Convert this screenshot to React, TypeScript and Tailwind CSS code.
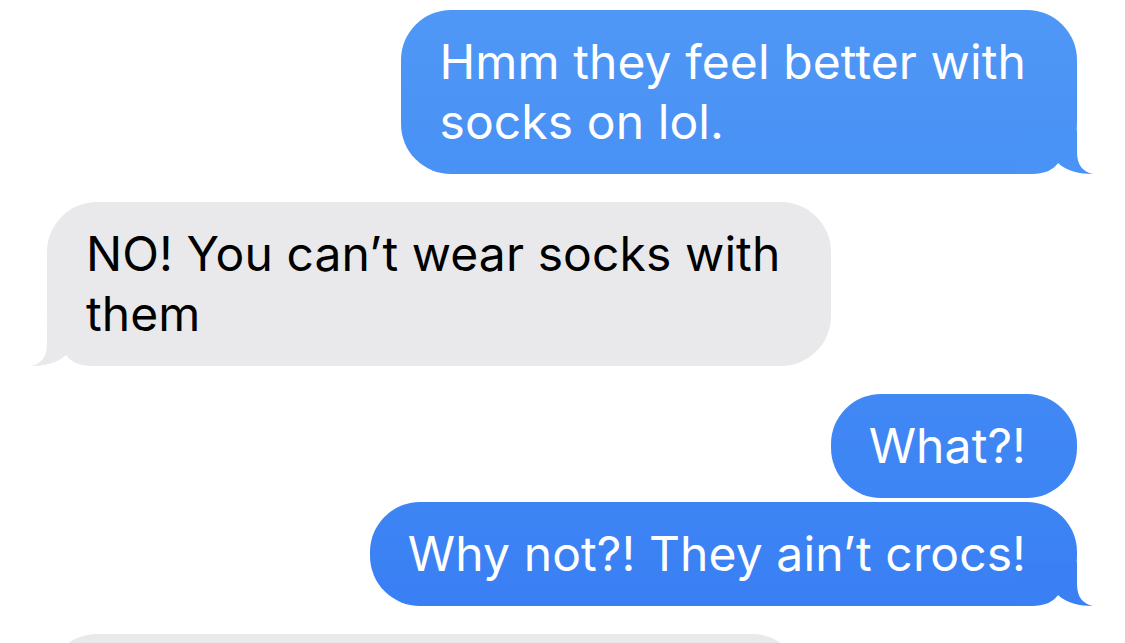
const messages = [
  { id: 1, from: 'me', lines: ['Hmm they feel better with', 'socks on lol.'], tail: true, tailColor: '#4a93f6' },
  { id: 2, from: 'them', lines: ['NO! You can’t wear socks with', 'them'], tail: true },
  { id: 3, from: 'me', lines: ['What?!'], tail: false, tailColor: '' },
  { id: 4, from: 'me', lines: ['Why not?! They ain’t crocs!'], tail: true, tailColor: '#3a80f4' },
  { id: 5, from: 'them', lines: [], tail: false },
]

function Tail({ color, flip }: { color: string; flip?: boolean }) {
  return (
    <svg
      className={`pointer-events-none absolute bottom-0 h-[44px] w-[76px] ${flip ? 'left-[-16px] -scale-x-100' : 'right-[-16px]'}`}
      viewBox="0 0 76 44"
      fill={color}
    >
      <path d="M0 44 L0 0 L60 0 L60 22 C60 35 66 42 76 44 C63 44 49 41 41 33 C36 40 28 44 14 44 Z" />
    </svg>
  )
}

function Lines({ lines }: { lines: string[] }) {
  return (
    <span className="relative flex flex-col whitespace-nowrap">
      {lines.map((l) => (
        <span key={l}>{l}</span>
      ))}
    </span>
  )
}

export default function App() {
  return (
    <div className="h-[643px] w-[1125px] overflow-hidden bg-white pt-[10px] font-['Inter','Liberation_Sans',sans-serif] text-[48px] leading-[60px] tracking-[0.1px]">
      <div className="flex flex-col">
        {messages.map((m, i) => {
          const prev = messages[i - 1]
          const gap = !prev ? '' : prev.from === m.from ? 'mt-[4px]' : 'mt-[28px]'
          if (m.from === 'me') {
            return (
              <div key={m.id} className={`flex justify-end pr-[48px] ${gap}`}>
                <div className="relative rounded-[50px] bg-gradient-to-b from-[#4f98f6] to-[#387ef4] bg-fixed py-[22px] pr-[51px] pl-[38px] text-white">
                  {m.tail && <Tail color={m.tailColor} />}
                  <Lines lines={m.lines} />
                </div>
              </div>
            )
          }
          if (m.lines.length === 0) {
            // next message, scrolled below the fold
            return (
              <div key={m.id} className={`flex justify-start pl-[47px] ${gap}`}>
                <div className="h-[104px] w-[755px] rounded-[50px] bg-[#e9e9eb]" />
              </div>
            )
          }
          return (
            <div key={m.id} className={`flex justify-start pl-[47px] ${gap}`}>
              <div className="relative rounded-[50px] bg-[#e9e9eb] py-[22px] pr-[51px] pl-[39px] text-black">
                {m.tail && <Tail color="#e9e9eb" flip />}
                <Lines lines={m.lines} />
              </div>
            </div>
          )
        })}
      </div>
    </div>
  )
}
